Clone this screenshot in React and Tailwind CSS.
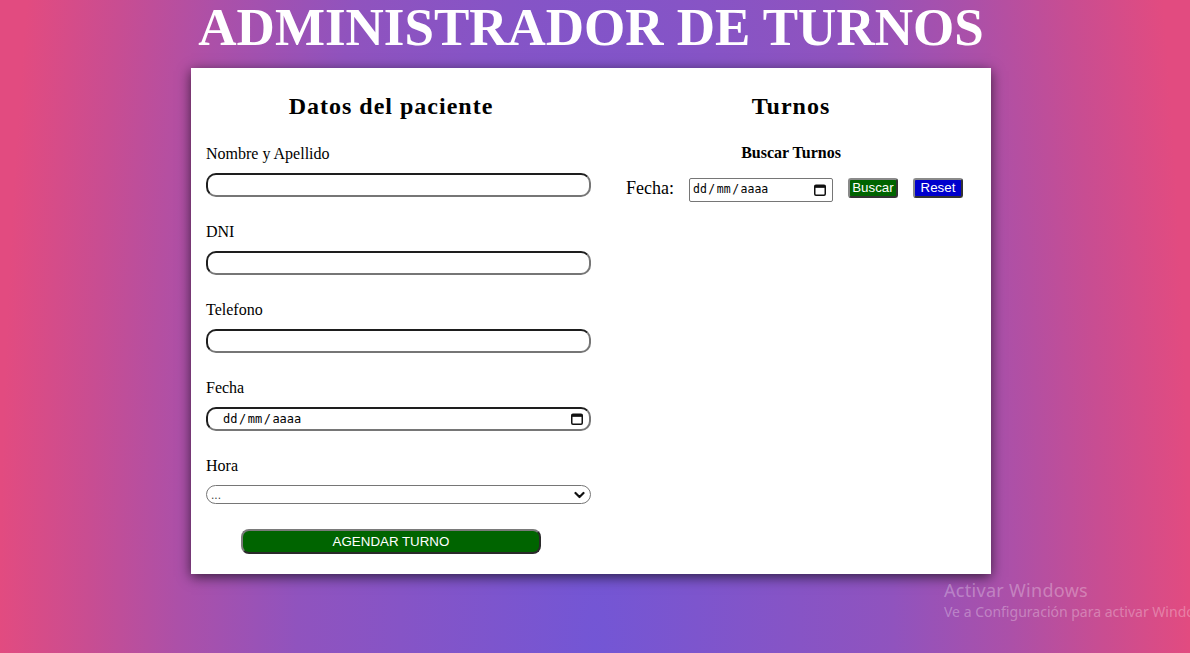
function CalendarIcon() {
  return (
    <svg width="14" height="14" viewBox="0 0 14 14" className="shrink-0">
      <rect x="1.75" y="2.25" width="10.5" height="10" rx="1.2" fill="none" stroke="#111" strokeWidth="1.5" />
      <rect x="1.75" y="2.25" width="10.5" height="2.6" fill="#111" />
    </svg>
  );
}

function DateText({ size }) {
  return (
    <span className={`font-['DejaVu_Sans_Mono',monospace] leading-none text-black ${size}`}>
      dd<span className="mx-[1.5px]">/</span>mm<span className="mx-[1.5px]">/</span>aaaa
    </span>
  );
}

function Field({ label, first }) {
  return (
    <div className={first ? "" : "mt-[26px]"}>
      <div className="text-[16px] leading-[18px] text-black">{label}</div>
      <input
        type="text"
        className="mt-[10px] block h-[24px] w-full rounded-[10px] border-2 border-t-[#1e1e1e] border-l-[#1e1e1e] border-r-[#767676] border-b-[#767676] bg-white px-2 outline-none"
      />
    </div>
  );
}

export default function App() {
  return (
    <div className="relative min-h-screen w-full overflow-hidden bg-[radial-gradient(595px_2200px_at_50%_100%,#7356d5_0%,#9053be_50%,#ac50a8_70%,#c84d92_85%,#e24b80_100%)] font-['Liberation_Serif',serif]">
      <div className="flex flex-col items-center pr-[8px]">
        <h1 className="-mt-[2px] text-[53px] font-bold leading-[58px] text-white">ADMINISTRADOR DE TURNOS</h1>

        <div className="mt-[12px] grid h-[506px] w-[800px] grid-cols-2 bg-white shadow-[0_3px_12px_rgba(0,0,0,0.65)]">
          {/* Left column */}
          <div className="pt-[24px]">
            <h2 className="text-center text-[24px] font-bold leading-[28px] tracking-[1px] text-black">Datos del paciente</h2>
            <div className="mt-[25px] pl-[15px]">
              <Field label="Nombre y Apellido" first />
              <Field label="DNI" />
              <Field label="Telefono" />
              <div className="mt-[26px]">
                <div className="text-[16px] leading-[18px] text-black">Fecha</div>
                <div className="mt-[10px] flex h-[24px] w-full items-center justify-between rounded-[10px] border-2 border-t-[#1e1e1e] border-l-[#1e1e1e] border-r-[#767676] border-b-[#767676] bg-white pl-[15px] pr-[5px]">
                  <DateText size="text-[12px]" />
                  <CalendarIcon />
                </div>
              </div>
              <div className="mt-[26px]">
                <div className="text-[16px] leading-[18px] text-black">Hora</div>
                <div className="mt-[10px] flex h-[19px] w-full items-center justify-between rounded-[10px] border border-[#767676] bg-white pl-[4px] pr-[5px]">
                  <span className="font-['Liberation_Sans',sans-serif] text-[12px] leading-none text-[#444]">...</span>
                  <svg width="11" height="8" viewBox="0 0 11 8">
                    <polyline points="1.5,2 5.5,6 9.5,2" fill="none" stroke="#111" strokeWidth="2.2" strokeLinecap="round" strokeLinejoin="round" />
                  </svg>
                </div>
              </div>
            </div>
            <button className="mx-auto mt-[25px] block h-[25px] w-[300px] rounded-[8px] border-2 border-t-[#7a7a7a] border-l-[#7a7a7a] border-r-[#2a2a2a] border-b-[#2a2a2a] bg-[#006400] font-['Liberation_Sans',sans-serif] text-[13.33px] leading-none text-white">
              AGENDAR TURNO
            </button>
          </div>

          {/* Right column */}
          <div className="pt-[24px]">
            <h2 className="text-center text-[24px] font-bold leading-[28px] tracking-[1px] text-black">Turnos</h2>
            <h3 className="mt-[24px] text-center text-[16px] font-bold leading-[18px] text-black">Buscar Turnos</h3>
            <div className="mt-[16px] flex items-start pl-[35px]">
              <span className="text-[18px] leading-[20px] text-black">Fecha:</span>
              <div className="ml-[15px] flex h-[24px] w-[144px] items-center justify-between rounded-[2px] border border-[#767676] bg-white pl-[3px] pr-[5px]">
                <DateText size="text-[11.5px]" />
                <CalendarIcon />
              </div>
              <button className="ml-[15px] flex h-[20px] w-[50px] items-center justify-center rounded-[3px] border-2 border-t-[#8a8a8a] border-l-[#8a8a8a] border-r-[#333] border-b-[#333] bg-[#006400] font-['Liberation_Sans',sans-serif] text-[13.33px] leading-none text-white">
                Buscar
              </button>
              <button className="ml-[15px] flex h-[20px] w-[50px] items-center justify-center rounded-[3px] border-2 border-t-[#8a8a8a] border-l-[#8a8a8a] border-r-[#333] border-b-[#333] bg-[#0000cd] font-['Liberation_Sans',sans-serif] text-[13.33px] leading-none text-white">
                Reset
              </button>
            </div>
          </div>
        </div>
      </div>

      <div className="pointer-events-none absolute left-[944px] top-[578px] whitespace-nowrap font-['Noto_Sans',sans-serif] text-white/30">
        <div className="text-[18px] leading-[24px] tracking-[0.3px]">Activar Windows</div>
        <div className="text-[14px] leading-[20px]">Ve a Configuración para activar Windows</div>
      </div>
    </div>
  );
}
